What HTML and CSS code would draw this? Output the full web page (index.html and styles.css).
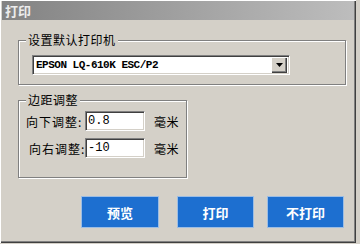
FILE: index.html
```html
<!DOCTYPE html>
<html lang="zh-CN">
<head>
    <meta charset="UTF-8">
    <title>打印</title>
    <link rel="stylesheet" href="styles.css">
</head>
<body>
    <div class="window">
        <!-- Title Bar -->
        <div class="title-bar">打印</div>

        <div class="content">
            <!-- Printer Group -->
            <fieldset class="group group-printer">
                <legend>设置默认打印机</legend>
                <div class="combo">
                    <span class="combo-text">EPSON LQ-610K ESC/P2</span>
                    <span class="combo-button">
                        <svg width="7" height="4" viewBox="0 0 7 4"><path d="M0 0H7L3.5 4Z" fill="#000"/></svg>
                    </span>
                </div>
            </fieldset>

            <!-- Margin Group -->
            <fieldset class="group group-margin">
                <legend>边距调整</legend>
                <div class="field-row">
                    <label class="field-label" for="down">向下调整:</label>
                    <input class="field-input" id="down" type="text" value="0.8">
                    <span class="field-unit">毫米</span>
                </div>
                <div class="field-row">
                    <label class="field-label field-label-indent" for="right">向右调整:</label>
                    <input class="field-input" id="right" type="text" value="-10">
                    <span class="field-unit">毫米</span>
                </div>
            </fieldset>

            <!-- Buttons -->
            <div class="button-group">
                <button class="button button-preview">预览</button>
                <button class="button">打印</button>
                <button class="button">不打印</button>
            </div>
        </div>
    </div>
</body>
</html>
```

FILE: styles.css
```css
/* Basic Reset */
* {
    margin: 0;
    padding: 0;
    box-sizing: border-box;
}

body {
    background-color: #d4d0c8;
    font-family: "Noto Sans CJK SC", "Liberation Sans", sans-serif;
    font-size: 12px;
    color: #000;
    width: 360px;
    height: 244px;
    overflow: hidden;
}

/* Window Frame */
.window {
    width: 356px;
    height: 243px;
    padding: 1px 2px 0 2px;
    background-color: #d4d0c8;
    box-shadow: inset 1px 1px 0 #fff, inset -1px -1px 0 #404040, inset -2px -2px 0 #808080;
}

/* Title Bar */
.title-bar {
    height: 19px;
    padding-left: 3px;
    line-height: 19px;
    font-weight: 700;
    font-size: 13px;
    color: #ececec;
    background: linear-gradient(to right, #838383, #bdbdbd);
}

.content {
    padding: 13px 0 0 16px;
}

/* Group Boxes */
.group {
    border: 1px solid #808080;
    box-shadow: inset 1px 1px 0 #fff, 1px 1px 0 #fff;
}
.group legend {
    padding: 0 2px;
    line-height: 14px;
    font-size: 12px;
    letter-spacing: 0.5px;
    background-color: #d4d0c8;
}

.group-printer {
    width: 328px;
    padding: 8px 13px 9px 13px;
}
.group-printer legend {
    margin-left: -6px;
}

.group-margin {
    width: 168px;
    margin-top: 8px;
    padding: 4px 7px 19px 7px;
}

/* Combo Box */
.combo {
    display: flex;
    align-items: center;
    width: 258px;
    height: 20px;
    padding: 2px;
    background-color: #fff;
    border-top: 1px solid #808080;
    border-left: 1px solid #808080;
    border-bottom: 1px solid #fff;
    border-right: 1px solid #fff;
    box-shadow: inset 1px 1px 0 #404040, inset -1px -1px 0 #d4d0c8;
}
.combo-text {
    flex: 1;
    padding-left: 1px;
    font-family: "Liberation Mono", monospace;
    font-size: 11px;
    font-weight: 700;
    letter-spacing: -0.5px;
}
.combo-button {
    display: flex;
    align-items: center;
    justify-content: center;
    width: 16px;
    height: 16px;
    background-color: #d4d0c8;
    box-shadow: inset 1px 1px 0 #fff, inset -1px -1px 0 #404040, inset -2px -2px 0 #808080;
}

/* Fields */
.field-row {
    display: flex;
    align-items: center;
}
.field-row + .field-row {
    margin-top: 7px;
}
.field-label {
    width: 59px;
    font-size: 12px;
    letter-spacing: 1px;
    white-space: nowrap;
}
.field-label-indent {
    padding-left: 3px;
}
.field-input {
    width: 60px;
    height: 20px;
    padding: 0 2px;
    font-family: "Liberation Mono", monospace;
    font-size: 12px;
    background-color: #fff;
    border-top: 1px solid #808080;
    border-left: 1px solid #808080;
    border-bottom: 1px solid #fff;
    border-right: 1px solid #fff;
    box-shadow: inset 1px 1px 0 #404040, inset -1px -1px 0 #d4d0c8;
    outline: none;
}
.field-unit {
    margin-left: 9px;
    font-size: 12px;
    letter-spacing: 0.5px;
    white-space: nowrap;
}

/* Buttons */
.button-group {
    display: flex;
    justify-content: flex-end;
    gap: 15px;
    margin-top: 19px;
    padding-right: 11px;
}
.button {
    width: 75px;
    height: 30px;
    border: none;
    background-color: #1d6fd0;
    box-shadow: 0 0 0 1px #9cbde4;
    color: #fff;
    font-family: "Noto Sans CJK SC", sans-serif;
    font-size: 13px;
    font-weight: 700;
}
.button-preview {
    width: 76px;
    margin-right: 5px;
}
```
